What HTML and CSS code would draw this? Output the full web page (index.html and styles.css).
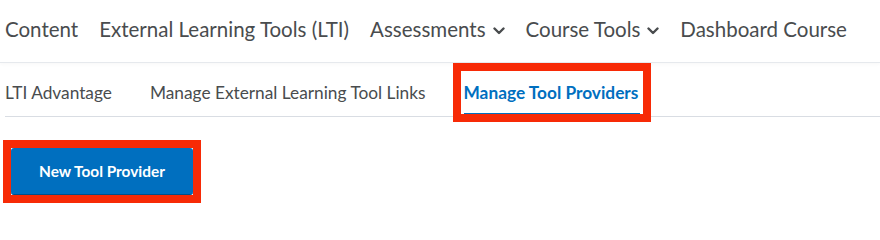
FILE: index.html
```html
<!DOCTYPE html>
<html>
<head>
<meta charset="utf-8">
<link rel="stylesheet" href="styles.css">
</head>
<body>
<nav class="topnav">
  <a class="nav-item">Content</a>
  <a class="nav-item">External Learning Tools (LTI)</a>
  <a class="nav-item">Assessments <svg class="chev" viewBox="0 0 12 8" width="12" height="8"><path d="M1.5 1.5 L6 6 L10.5 1.5" fill="none" stroke="#494c4e" stroke-width="2.4" stroke-linecap="round" stroke-linejoin="round"/></svg></a>
  <a class="nav-item">Course Tools <svg class="chev" viewBox="0 0 12 8" width="12" height="8"><path d="M1.5 1.5 L6 6 L10.5 1.5" fill="none" stroke="#494c4e" stroke-width="2.4" stroke-linecap="round" stroke-linejoin="round"/></svg></a>
  <a class="nav-item">Dashboard Course</a>
</nav>
<div class="tabs-wrap">
  <div class="tabs">
    <span class="tab">LTI Advantage</span>
    <span class="tab">Manage External Learning Tool Links</span>
    <span class="tab active highlighted">Manage Tool Providers</span>
  </div>
</div>
<div class="actions">
  <span class="highlight-btn"><button class="btn-primary">New Tool Provider</button></span>
</div>
</body>
</html>
```

FILE: styles.css
```css
html, body {
  margin: 0;
  padding: 0;
  background: #ffffff;
}
body {
  font-family: Lato, "Noto Sans", sans-serif;
  color: #494c4e;
  width: 880px;
  height: 216px;
  overflow: hidden;
}
.topnav {
  display: flex;
  align-items: center;
  padding: 17px 0 21px 5px;
  height: 24px;
  border-bottom: 1px solid #e6e9ed;
  box-shadow: 0 2px 3px rgba(0,0,0,0.025);
}
.nav-item {
  font-size: 20.5px;
  line-height: 24px;
  margin-right: 21px;
  white-space: nowrap;
  display: flex;
  align-items: center;
}
.chev {
  margin-left: 7px;
  margin-top: 3px;
}
.tabs-wrap {
  padding: 0 0 0 5px;
}
.tabs {
  display: flex;
  padding-top: 20px;
  border-bottom: 1px solid #d9dde3;
}
.tab {
  font-size: 17.3px;
  line-height: 20px;
  padding-bottom: 10px;
  border-bottom: 3px solid transparent;
  margin-right: 38px;
  white-space: nowrap;
  position: relative;
}
.tab.active {
  font-weight: 700;
  color: #006fbf;
  border-bottom-color: #006fbf;
  padding-right: 2px;
}
.highlighted::after {
  content: "";
  position: absolute;
  left: -11px;
  top: -20px;
  right: -11px;
  bottom: -9px;
  border: 8px solid #f72a06;
  pointer-events: none;
}
.actions {
  padding: 31px 0 0 11px;
}
.highlight-btn {
  position: relative;
  display: inline-block;
}
.highlight-btn::after {
  content: "";
  position: absolute;
  left: -8px;
  top: -8px;
  right: -8px;
  bottom: -8px;
  border: 8px solid #f72a06;
}
.btn-primary {
  display: block;
  width: 182px;
  height: 47px;
  border: none;
  border-bottom: 1px solid #00508a;
  border-radius: 3px;
  background: #006fbf;
  color: #ffffff;
  font-family: Lato, "Noto Sans", sans-serif;
  font-weight: 700;
  font-size: 15.4px;
  padding: 0;
  margin: 0;
}
```
